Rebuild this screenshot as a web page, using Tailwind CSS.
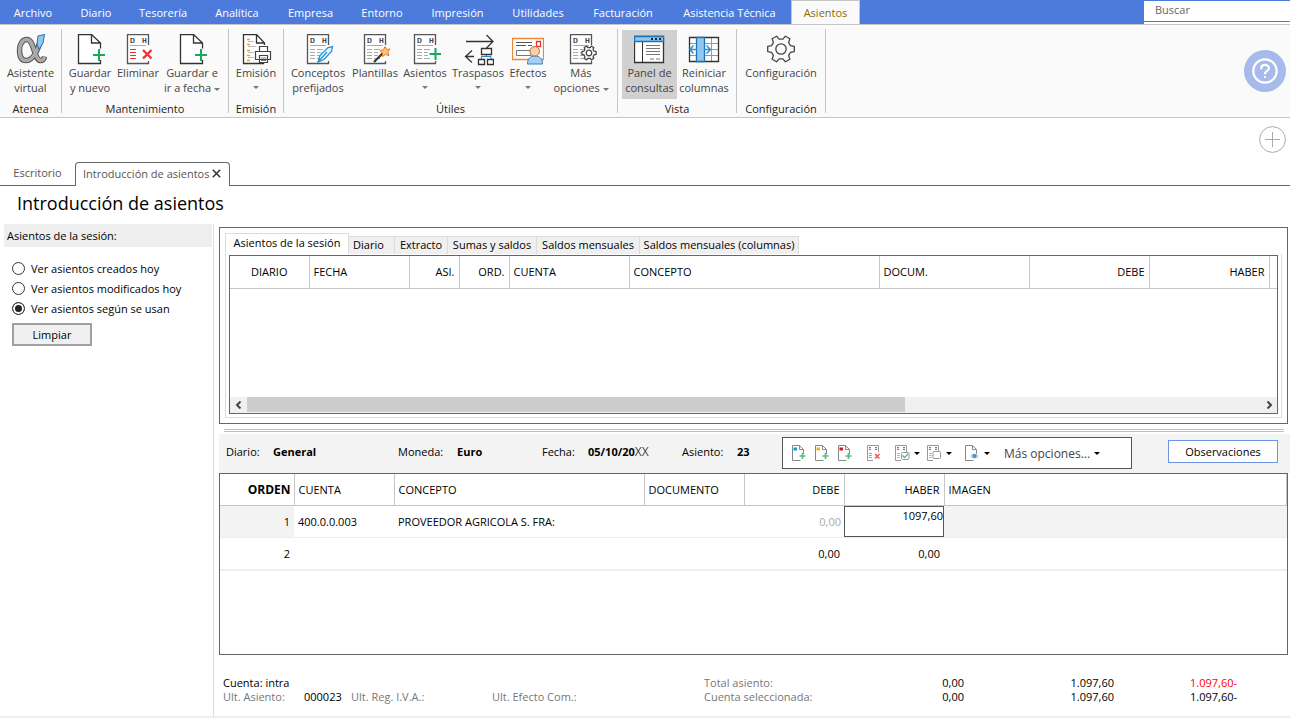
<!DOCTYPE html>
<html lang="es">
<head>
<meta charset="utf-8">
<title>Introducción de asientos</title>
<script src="https://cdn.jsdelivr.net/npm/@tailwindcss/browser@4"></script>
</head>
<body class="flex min-h-screen flex-col bg-white font-['Open_Sans','Noto_Sans',sans-serif] text-[11px] leading-[15px] text-black">

<!-- shared icon shapes -->
<svg class="hidden" aria-hidden="true">
  <symbol id="page-plus" viewBox="0 0 32 32"><path d="M26.5 14V9L17.500.5H4.500V29.500H23M17.500.5V9H26.500" fill="#fff"/><path d="M26.500 14.500V9L17.500.5H4.500V29.500H26.500V26M17.500.5V9H26.500" fill="none" stroke="#333" stroke-width="1.300"/><path d="M25 15V27M19 21H31" stroke="#17a85a" stroke-width="2"/></symbol>
  <symbol id="ledger" viewBox="0 0 32 32"><path d="M5.500.5H26.500V29.500H5.500Z" fill="#fff"/><path d="M26.500 11V.5H5.500V29.500H26.500V27" fill="none" stroke="#555" stroke-width="1.300"/><path d="M8 11.500H24" stroke="#aaa"/><g font-family="Liberation Mono,monospace" font-size="8" fill="#222" stroke="#222" stroke-width=".2"><text x="8" y="8.500">D</text><text x="20" y="8.500">H</text></g></symbol>
  <symbol id="ledger-lines" viewBox="0 0 32 32"><path d="M8 15.500H13M8 18.500H13M8 21.500H13M8 24.500H13M15 15.500H21M15 18.500H19M15 21.500H19M15 24.500H21" stroke="#aaa"/></symbol>
  <symbol id="gear" viewBox="-15 -15 30 30"><path d="M9.500-3.300 13.300-2.600V2.600L9.500 3.300 7.600 6.600 8.900 10.200 4.400 12.800 1.900 9.900H-1.900L-4.400 12.800-8.900 10.200-7.600 6.600-9.500 3.300-13.300 2.600V-2.600L-9.500-3.300-7.600-6.600-8.900-10.200-4.400-12.800-1.900-9.900H1.900L4.400-12.800 8.900-10.200 7.600-6.600Z" stroke-linejoin="round"/><circle r="5.200"/></symbol>
  <symbol id="mini-page" viewBox="0 0 16 16"><path d="M9.500 15.500H1.500V.5H8.500L12.500 4.500V9M8.500.5V4.500H12.500" fill="none" stroke="#888"/></symbol>
  <symbol id="mini-plus" viewBox="0 0 16 16"><path d="M11.500 8V14M8.500 11H14.500" stroke="#4fbf80" stroke-width="1.700"/></symbol>
  <symbol id="mini-ledger" viewBox="0 0 16 16"><path d="M12.500 7V.5H1.500V15.500H7" fill="none" stroke="#999"/><path d="M4 2V5M10 2V5" stroke="#777" stroke-width="2" stroke-dasharray="1.300 .6"/></symbol>
</svg>

<header class="flex h-6 items-stretch bg-[#4d7bdc] text-white">
  <nav class="flex flex-1" aria-label="Menú principal">
    <button class="w-[66px] whitespace-nowrap">Archivo</button>
    <button class="w-[60px] whitespace-nowrap">Diario</button>
    <button class="w-[74px] whitespace-nowrap">Tesorería</button>
    <button class="w-[74px] whitespace-nowrap">Analítica</button>
    <button class="w-[73px] whitespace-nowrap">Empresa</button>
    <button class="w-[70px] whitespace-nowrap">Entorno</button>
    <button class="w-[81px] whitespace-nowrap">Impresión</button>
    <button class="w-20 whitespace-nowrap">Utilidades</button>
    <button class="w-[90px] whitespace-nowrap">Facturación</button>
    <button class="w-[123px] whitespace-nowrap">Asistencia Técnica</button>
    <button class="-mb-px w-[69px] border-x border-t border-[#c6c6c6] bg-[#fafafa] pb-0.5 text-[#8f6a00]">Asientos</button>
  </nav>
  <div class="mt-px w-[146px] bg-white">
    <input type="text" aria-label="Buscar" placeholder="Buscar" class="block h-[21px] w-full border-b border-[#777] bg-white px-[11px] pb-1 text-[11px] text-black outline-none placeholder:text-[#666]">
  </div>
</header>

<section class="flex border-y border-[#c6c6c6] bg-[#fafafa] text-[#444]" aria-label="Cinta de opciones">
  <div class="my-1 flex h-[84px] w-[62px] flex-col border-r border-[#c6c6c6]">
    <div class="flex h-[70px] shrink-0">
      <button class="flex w-full flex-col items-center pt-[5px]">
        <svg class="-mb-px size-8 shrink-0" viewBox="0 0 32 32" fill="none"><path d="M25 8C22 18 18 26.500 11 26.500 6 26.500 4.500 21.500 4.500 16 4.500 10 7.500 5.500 12 5.500 19 5.500 19 25 25 26.500 27.500 27 29 25.500 29.500 22.500" stroke="#555" stroke-width="5.500"/><path d="M25 8C22 18 18 26.500 11 26.500 6 26.500 4.500 21.500 4.500 16 4.500 10 7.500 5.500 12 5.500 19 5.500 19 25 25 26.500 27.500 27 29 25.500 29.500 22.500" stroke="#aaa" stroke-width="3.500"/><path d="M23 2 29.500.5 28 9 24 15.500 22 10Z" fill="#8ec8f0" stroke="#1f72b5"/></svg>
        <span>Asistente<br>virtual</span></button>
    </div>
    <h2 class="mt-0.5 text-center text-[#222]">Atenea</h2>
  </div>
  <div class="my-1 flex h-[84px] w-[167px] flex-col border-r border-[#c6c6c6]">
    <div class="flex h-[70px] shrink-0 whitespace-nowrap px-1">
      <button class="flex w-12 flex-col items-center pt-[5px]"><svg class="-mb-px size-8 shrink-0"><use href="#page-plus"/></svg><span>Guardar<br>y nuevo</span></button>
      <button class="flex w-12 flex-col items-center pt-[5px]"><svg class="-mb-px size-8 shrink-0" viewBox="0 0 32 32"><use href="#ledger"/><path d="M8 15.500H14M8 18.500H14M8 21.500H14M8 24.500H14" stroke="#e83535"/><path d="M21 16 29.500 24.500M29.500 16 21 24.500" stroke="#e83535" stroke-width="2.400"/></svg><span>Eliminar</span></button>
      <button class="flex w-[60px] flex-col items-center pt-[5px]"><svg class="-mb-px size-8 shrink-0"><use href="#page-plus"/></svg><span>Guardar e<br>ir a fecha <span class="inline-block border-x-3 border-t-3 border-x-transparent border-t-[#777] align-middle"></span></span></button>
    </div>
    <h2 class="mt-0.5 text-center text-[#222]">Mantenimiento</h2>
  </div>
  <div class="my-1 flex h-[84px] w-[55px] flex-col border-r border-[#c6c6c6]">
    <div class="flex h-[70px] shrink-0">
      <button class="flex w-full flex-col items-center pt-[5px]"><svg class="-mb-px size-8 shrink-0" viewBox="0 0 32 32" fill="none"><path d="M24.500 11V9L16.500.5H3.500V29.500H23.500V28M16.500.5V9H24.500" fill="#fff" stroke="#333" stroke-width="1.300"/><path d="M7 5.500H10M7 10.500H10M7 16.500H10M7 21.500H10M7 26.500H10" stroke="#f29a2e" stroke-width="1.300"/><path d="M8 7.500H14M8 12.500H16M8 18.500H14M8 23.500H14" stroke="#bbb"/><path d="M19.500 17V12.500H27.500V17M15.500 17.500H30.500V25.500H15.500ZM19.500 21.500H27.500V28.500H19.500Z" fill="#fff" stroke="#444" stroke-width="1.200"/><path d="M21 24H26M21 26.500H26" stroke="#777"/></svg>
      <span>Emisión</span><span class="mt-1.5 border-x-3 border-t-3 border-x-transparent border-t-[#777]"></span></button>
    </div>
    <h2 class="mt-0.5 text-center text-[#222]">Emisión</h2>
  </div>
  <div class="my-1 flex h-[84px] w-[334px] flex-col border-r border-[#c6c6c6]">
    <div class="flex h-[70px] shrink-0 whitespace-nowrap">
      <button class="flex w-[68px] flex-col items-center pt-[5px]"><svg class="-mb-px size-8 shrink-0" viewBox="0 0 32 32"><use href="#ledger"/><use href="#ledger-lines"/><path d="M16 28 18 21.500 26 13.500 30.500 12.500 29.500 17.500 22 25.500ZM16 28 25 18" fill="#e3f5ff" stroke="#2196d6" stroke-width="1.300"/></svg><span>Conceptos<br>prefijados</span></button>
      <button class="flex w-[46px] flex-col items-center pt-[5px]"><svg class="-mb-px size-8 shrink-0" viewBox="0 0 32 32"><use href="#ledger"/><use href="#ledger-lines"/><path d="M15 28 24 19" stroke="#333" stroke-width="2.200"/><path d="M26 12.500 27.500 15.500 31 15 28.800 18 30 21.500 26.500 20.500 23.500 22.500 23.500 18.800 21 16.500 24.500 15.800Z" fill="#ffc08a" stroke="#ee7a1c"/></svg><span>Plantillas</span></button>
      <button class="flex w-[54px] flex-col items-center pt-[5px]"><svg class="-mb-px size-8 shrink-0" viewBox="0 0 32 32"><use href="#ledger"/><use href="#ledger-lines"/><path d="M26.500 14V26M20.500 20H32" stroke="#17a85a" stroke-width="2"/></svg><span>Asientos</span><span class="mt-1.5 border-x-3 border-t-3 border-x-transparent border-t-[#777]"></span></button>
      <button class="flex w-[52px] flex-col items-center pt-[5px]"><svg class="-mb-px size-8 shrink-0" viewBox="0 0 32 32" fill="none"><path d="M4 7.500H31M24.500 1 31 7.500 24.500 14M3.500 22.500H12M10 16.500 3.500 22.500 10 28.500" stroke="#333" stroke-width="1.300"/><path d="M19.500 25V22.500H29V25M24.500 20V22.500" stroke="#2b84c6"/><path d="M19.500 14.500H29.500V20.500H19.500ZM16.500 25.500H22.500V30.500H16.500ZM25.500 25.500H31.500V30.500H25.500Z" fill="#fff" stroke="#333" stroke-width="1.300"/></svg><span>Traspasos</span><span class="mt-1.5 border-x-3 border-t-3 border-x-transparent border-t-[#777]"></span></button>
      <button class="flex w-12 flex-col items-center pt-[5px]"><svg class="-mb-px size-8 shrink-0" viewBox="0 0 32 32" fill="none"><path d="M.5 4.500H31.500V25.500H.5Z" fill="#fff" stroke="#e98a35" stroke-width="1.300"/><path d="M4 8.500H20M4 11.500H14M16 11.500H20" stroke="#555"/><path d="M4.500 16.500H19V21.500H4.500Z" stroke="#777"/><path d="M24.500 7.500H28.500V12.500H24.500Z" stroke="#e83535" stroke-width="1.300"/><path d="M15.500 30C15.500 25 18 22 23 22S30.500 25 30.500 30Z" fill="#a5d0f2" stroke="#2b84c6"/><circle cx="22.700" cy="17.300" r="4.800" fill="#f8cfa8" stroke="#b5713c"/></svg><span>Efectos</span><span class="mt-1.5 border-x-3 border-t-3 border-x-transparent border-t-[#777]"></span></button>
      <button class="flex w-[58px] flex-col items-center pt-[5px]"><svg class="-mb-px size-8 shrink-0" viewBox="0 0 32 32"><use href="#ledger"/><use href="#ledger-lines"/><use href="#gear" x="16" y="11" width="16" height="16" fill="#fff" stroke="#444" stroke-width="2.400"/></svg><span>Más<br>opciones <span class="inline-block border-x-3 border-t-3 border-x-transparent border-t-[#777] align-middle"></span></span></button>
    </div>
    <h2 class="mt-0.5 text-center text-[#222]">Útiles</h2>
  </div>
  <div class="my-1 flex h-[84px] w-[119px] flex-col border-r border-[#c6c6c6]">
    <div class="flex h-[70px] shrink-0 whitespace-nowrap pl-1 pt-px">
      <button class="flex w-[55px] flex-col items-center bg-[#d0d0d0] pt-1" aria-pressed="true"><svg class="-mb-px size-8 shrink-0" viewBox="0 0 32 32" fill="none"><path d="M.5 2.500H29.500V28.500H.5Z" fill="#fff" stroke="#333" stroke-width="1.300"/><path d="M.5 2.500H29.500V7.500H.5Z" fill="#8ec8f0" stroke="#1f72b5" stroke-width="1.300"/><path d="M17 5H19M21 5H23M25 5H27" stroke="#222" stroke-width="2"/><path d="M8.500 8V28" stroke="#333"/><path d="M12 11.500H26M12 14.500H26M12 17.500H26M12 20.500H26M16 25H20M22 25H26" stroke="#777"/></svg><span>Panel de<br>consultas</span></button>
      <button class="flex w-[54px] flex-col items-center pt-1"><svg class="-mb-px size-8 shrink-0" viewBox="0 0 32 32" fill="none"><path d="M1.500 3.500H30.500V27.500H1.500Z" fill="#fff"/><path d="M1.500 9.500H30M1.500 15.500H30M1.500 21.500H30M23.500 4V27" stroke="#999"/><path d="M1.500 3.500H30.500V27.500H1.500Z" stroke="#333" stroke-width="1.300"/><path d="M8.500 3.500H16.500V27.500H8.500Z" fill="#8ec8f0" stroke="#1f72b5" stroke-width="1.300"/><path d="M9 15.500H2M5.500 11.500 2 15.500 5.500 19.500M16 15.500H22.500M18.500 11.500 22.500 15.500 18.500 19.500" stroke="#2b90d0" stroke-width="1.500"/></svg><span>Reiniciar<br>columnas</span></button>
    </div>
    <h2 class="mt-0.5 text-center text-[#222]">Vista</h2>
  </div>
  <div class="my-1 flex h-[84px] w-[89px] flex-col border-r border-[#c6c6c6]">
    <div class="flex h-[70px] shrink-0">
      <button class="flex w-full flex-col items-center pt-[5px]"><svg class="-mb-px size-8 shrink-0" viewBox="0 0 32 32"><use href="#gear" x="1" y="0" width="30" height="30" fill="none" stroke="#444" stroke-width="1.300"/></svg><span>Configuración</span></button>
    </div>
    <h2 class="mt-0.5 text-center text-[#222]">Configuración</h2>
  </div>
  <button class="my-auto ml-auto mr-1 size-[42px] rounded-full bg-[#a6bbec]" aria-label="Ayuda"><svg viewBox="0 0 42 42" fill="none" stroke="#fff"><circle cx="21" cy="21" r="11.700" stroke-width="2.200"/><path d="M17.200 18.500C17.200 13.800 25 13.800 25 18.300 25 21 21 20.800 21 23.500" stroke-width="2.200" stroke-linecap="round"/><path d="M21 26.200V28" stroke-width="2"/></svg></button>
</section>

<div class="flex items-end border-b border-[#666] pt-2 text-[#555]">
  <div class="-mb-px flex flex-1 items-end pt-9">
    <button class="h-6 w-[75px] pb-[3px]">Escritorio</button>
    <div class="flex h-6 w-[155px] items-center justify-between rounded-t border border-b-0 border-[#666] bg-white pb-[3px] pl-[7px] pr-2">
      <button class="whitespace-nowrap">Introducción de asientos</button>
      <button aria-label="Cerrar"><svg class="size-[9px]" viewBox="0 0 9 9"><path d="M.8.8 8.200 8.200M8.200.8.8 8.200" stroke="#333" stroke-width="1.500"/></svg></button>
    </div>
  </div>
  <button class="mr-1 size-[27px] self-start" aria-label="Añadir"><svg viewBox="0 0 27 27" fill="none" stroke="#aaa"><circle cx="13.500" cy="13.500" r="12.900"/><path d="M13.500 6V21M6 13.500H21"/></svg></button>
</div>

<h1 class="pl-[17px] pt-[5px] text-[18px] leading-6">Introducción de asientos</h1>

<main class="flex flex-1 pt-[9px]">
  <aside class="w-[214px] shrink-0 border-r border-[#dcdcdc] pl-1">
    <h2 class="mr-px h-[23px] bg-[#eee] pl-[3px] leading-6">Asientos de la sesión:</h2>
    <fieldset class="flex flex-col gap-[5px] pl-2 pt-3.5">
      <label class="flex items-center gap-1.5"><input type="radio" name="ver" class="size-[13px] appearance-none rounded-full border border-[#333] bg-white checked:bg-[#222] checked:shadow-[inset_0_0_0_2px_white]">Ver asientos creados hoy</label>
      <label class="flex items-center gap-1.5"><input type="radio" name="ver" class="size-[13px] appearance-none rounded-full border border-[#333] bg-white checked:bg-[#222] checked:shadow-[inset_0_0_0_2px_white]">Ver asientos modificados hoy</label>
      <label class="flex items-center gap-1.5"><input type="radio" name="ver" checked class="size-[13px] appearance-none rounded-full border border-[#333] bg-white checked:bg-[#222] checked:shadow-[inset_0_0_0_2px_white]">Ver asientos según se usan</label>
    </fieldset>
    <button class="ml-2 mt-[7px] h-[23px] w-20 border-2 border-[#a0a0a0] bg-[#f0f0f0]">Limpiar</button>
  </aside>

  <div class="flex min-w-0 flex-1 flex-col pl-[5px]">
    <section class="mr-0.5 mt-[3px] border border-[#666] px-[5px] py-[5px]">
      <div class="flex items-end whitespace-nowrap" role="tablist">
        <button role="tab" aria-selected="true" class="h-[21px] w-[124px] border border-b-0 border-[#dcdcdc] bg-white pb-[3px]">Asientos de la sesión</button>
        <button role="tab" class="h-[18px] w-[46px] border-r border-t border-[#dcdcdc] bg-[#f0f0f0] pb-0.5 pr-1.5">Diario</button>
        <button role="tab" class="h-[18px] w-[53px] border-r border-t border-[#dcdcdc] bg-[#f0f0f0] pb-0.5">Extracto</button>
        <button role="tab" class="h-[18px] w-[89px] border-r border-t border-[#dcdcdc] bg-[#f0f0f0] pb-0.5">Sumas y saldos</button>
        <button role="tab" class="h-[18px] w-[103px] border-r border-t border-[#dcdcdc] bg-[#f0f0f0] pb-0.5">Saldos mensuales</button>
        <button role="tab" class="h-[18px] w-[159px] border-r border-t border-[#dcdcdc] bg-[#f0f0f0] pb-0.5">Saldos mensuales (columnas)</button>
      </div>
      <div class="border border-t-0 border-[#dcdcdc] px-[3px] pb-[3px] pt-px">
        <div class="flex h-[159px] flex-col border border-[#666]">
          <table class="w-full table-fixed border-b border-[#666]">
            <colgroup><col class="w-[79px]"><col class="w-[100px]"><col class="w-[50px]"><col class="w-[50px]"><col class="w-[120px]"><col><col class="w-[150px]"><col class="w-[120px]"><col class="w-[120px]"><col class="w-2"></colgroup>
            <thead><tr class="h-8 border-b border-[#c6c6c6] text-left">
              <th class="border-r border-[#c6c6c6] text-center font-normal">DIARIO</th>
              <th class="border-r border-[#c6c6c6] px-1 font-normal">FECHA</th>
              <th class="border-r border-[#c6c6c6] px-1 text-right font-normal">ASI.</th>
              <th class="border-r border-[#c6c6c6] px-1 text-right font-normal">ORD.</th>
              <th class="border-r border-[#c6c6c6] px-1 font-normal">CUENTA</th>
              <th class="border-r border-[#c6c6c6] px-1 font-normal">CONCEPTO</th>
              <th class="border-r border-[#c6c6c6] px-1 font-normal">DOCUM.</th>
              <th class="border-r border-[#c6c6c6] px-1 text-right font-normal">DEBE</th>
              <th class="border-r border-[#c6c6c6] px-1 text-right font-normal">HABER</th>
              <th></th>
            </tr></thead>
          </table>
          <div class="mt-auto flex h-4 bg-[#f0f0f0]">
            <button class="grid w-[17px] place-items-center" aria-label="Desplazar a la izquierda"><svg class="size-2" viewBox="0 0 8 8" fill="none" stroke="#444" stroke-width="2"><path d="M5.500.5 2 4 5.500 7.500"/></svg></button>
            <div class="flex-1"><div class="h-[15px] w-[65%] bg-[#cdcdcd]"></div></div>
            <button class="grid w-[17px] place-items-center" aria-label="Desplazar a la derecha"><svg class="size-2" viewBox="0 0 8 8" fill="none" stroke="#444" stroke-width="2"><path d="M2.500.5 6 4 2.500 7.500"/></svg></button>
          </div>
        </div>
      </div>
    </section>

    <div class="ml-[5px] mr-1.5 mt-[5px] h-[3px] border-y border-[#c0c0c0]"></div>

    <div class="mt-0.5 flex items-start whitespace-nowrap bg-[#f3f3f3] pb-1 pl-[7px] pt-[3px]">
      <div class="flex h-[29px] items-center">
        <div class="w-[47px]">Diario:</div><b class="w-[125px] font-bold">General</b>
        <div class="w-[59px]">Moneda:</div><b class="w-[85px] font-bold">Euro</b>
        <div class="w-[46px]">Fecha:</div><div class="w-[94px]"><b class="font-bold">05/10/20</b><span class="text-[12px] text-[#444]">XX</span></div>
        <div class="w-[55px]">Asiento:</div><b class="w-[45px] font-bold">23</b>
      </div>
      <div class="flex h-8 w-[350px] items-center border border-[#555] bg-white pl-2">
        <button class="mr-[7px]" aria-label="Nuevo asiento azul"><svg class="size-4" viewBox="0 0 16 16"><use href="#mini-page"/><path d="M2.500 2.500H6V5.500H2.500Z" fill="#0a9be0"/><use href="#mini-plus"/></svg></button>
        <button class="mr-[7px]" aria-label="Nuevo asiento amarillo"><svg class="size-4" viewBox="0 0 16 16"><use href="#mini-page"/><path d="M2.500 2.500H6V5.500H2.500Z" fill="#f5b021"/><use href="#mini-plus"/></svg></button>
        <button class="mr-[13px]" aria-label="Nuevo asiento rojo"><svg class="size-4" viewBox="0 0 16 16"><use href="#mini-page"/><path d="M2.500 2.500H6V5.500H2.500Z" fill="#e0101a"/><use href="#mini-plus"/></svg></button>
        <button class="mr-3" aria-label="Eliminar línea"><svg class="size-4" viewBox="0 0 16 16"><use href="#mini-ledger"/><path d="M3 8.500H6M3 10.500H6M3 12.500H6" stroke="#f08080"/><path d="M9 9 13.500 13.500M13.500 9 9 13.500" stroke="#ef5350" stroke-width="1.500"/></svg></button>
        <button class="mr-1.5 flex items-center gap-1" aria-label="Validar"><svg class="size-4" viewBox="0 0 16 16"><use href="#mini-ledger"/><path d="M3 8.500H6M3 10.500H6M3 12.500H6" stroke="#bbb"/><rect x="7.500" y="7.500" width="7.500" height="7" rx="1" fill="#fff" stroke="#999"/><path d="M8.500 10.500 10.500 12.500 14 9" fill="none" stroke="#4fbf80" stroke-width="1.300"/></svg><span class="border-x-3 border-t-3 border-x-transparent border-t-black"></span></button>
        <button class="mr-3 flex items-center gap-1" aria-label="Copiar"><svg class="size-4" viewBox="0 0 16 16"><use href="#mini-ledger"/><path d="M3 8.500H6M3 10.500H6M3 12.500H6" stroke="#bbb"/><rect x="7" y="6.500" width="7.500" height="7" rx="1" fill="#fff" stroke="#999"/></svg><span class="border-x-3 border-t-3 border-x-transparent border-t-black"></span></button>
        <button class="mr-3.5 flex items-center gap-1" aria-label="Vista previa"><svg class="size-4" viewBox="0 0 16 16"><use href="#mini-page"/><ellipse cx="10.500" cy="11" rx="4" ry="2.500" fill="#b8d8ef"/><circle cx="10.500" cy="11" r="2" fill="#4b8fc4"/></svg><span class="border-x-3 border-t-3 border-x-transparent border-t-black"></span></button>
        <button class="flex items-center gap-1 text-[12px] text-[#444]">Más opciones...<span class="border-x-3 border-t-3 border-x-transparent border-t-black"></span></button>
      </div>
      <div class="ml-auto mr-3 flex h-[29px] items-center"><button class="h-[23px] w-[110px] border border-[#6f93e3] bg-white pb-px">Observaciones</button></div>
    </div>

    <div class="mr-0.5 flex-1 border border-[#666]">
      <table class="w-full table-fixed">
        <colgroup><col class="w-[74px]"><col class="w-[100px]"><col class="w-[250px]"><col class="w-[100px]"><col class="w-[100px]"><col class="w-[100px]"><col></colgroup>
        <thead><tr class="h-[31px] border-b border-[#c6c6c6] text-left">
          <th class="border-r border-[#c6c6c6] pr-[3px] text-right text-[12px] font-bold">ORDEN</th>
          <th class="border-r border-[#c6c6c6] px-1 font-normal">CUENTA</th>
          <th class="border-r border-[#c6c6c6] px-1 font-normal">CONCEPTO</th>
          <th class="border-r border-[#c6c6c6] px-1 font-normal">DOCUMENTO</th>
          <th class="border-r border-[#c6c6c6] px-1 text-right font-normal">DEBE</th>
          <th class="border-r border-[#c6c6c6] px-1 text-right font-normal">HABER</th>
          <th class="border-r border-[#c6c6c6] px-1 font-normal">IMAGEN</th>
        </tr></thead>
        <tbody>
          <tr class="h-8 border-b border-[#eee]">
            <td class="bg-[#f3f3f3] px-1 text-right">1</td><td class="px-1">400.0.0.003</td><td class="px-1">PROVEEDOR AGRICOLA S. FRA:</td><td></td>
            <td class="pr-[3px] text-right text-[#aaa]">0,00</td>
            <td class="p-0"><input type="text" aria-label="Haber" value="1097,60" class="block h-[31px] w-full border border-[#555] bg-white pb-3 text-right text-[11px] leading-4 outline-none"></td>
            <td class="bg-[#f3f3f3]"></td>
          </tr>
          <tr class="h-[33px] border-b-2 border-[#eee]">
            <td class="px-1 text-right">2</td><td></td><td></td><td></td><td class="px-1 text-right">0,00</td><td class="px-1 text-right">0,00</td><td></td>
          </tr>
        </tbody>
      </table>
    </div>

    <footer class="flex whitespace-nowrap pb-3 pl-1 pt-[21px] leading-[14px] text-[#777]">
      <div class="w-[481px]">
        <div class="text-black">Cuenta: intra</div>
        <div class="flex"><span class="w-[81px]">Ult. Asiento:</span><span class="w-[47px] text-black">000023</span><span class="w-[141px]">Ult. Reg. I.V.A.:</span><span>Ult. Efecto Com.:</span></div>
      </div>
      <div class="grid grid-cols-[160px_100px_150px_123px] text-right text-black">
        <span class="text-left text-[#777]">Total asiento:</span><span>0,00</span><span>1.097,60</span><span class="text-[#ff0000]">1.097,60-</span>
        <span class="text-left text-[#777]">Cuenta seleccionada:</span><span>0,00</span><span>1.097,60</span><span>1.097,60-</span>
      </div>
    </footer>
  </div>
</main>
<div class="h-0.5 bg-[#eee]"></div>
</body>
</html>
